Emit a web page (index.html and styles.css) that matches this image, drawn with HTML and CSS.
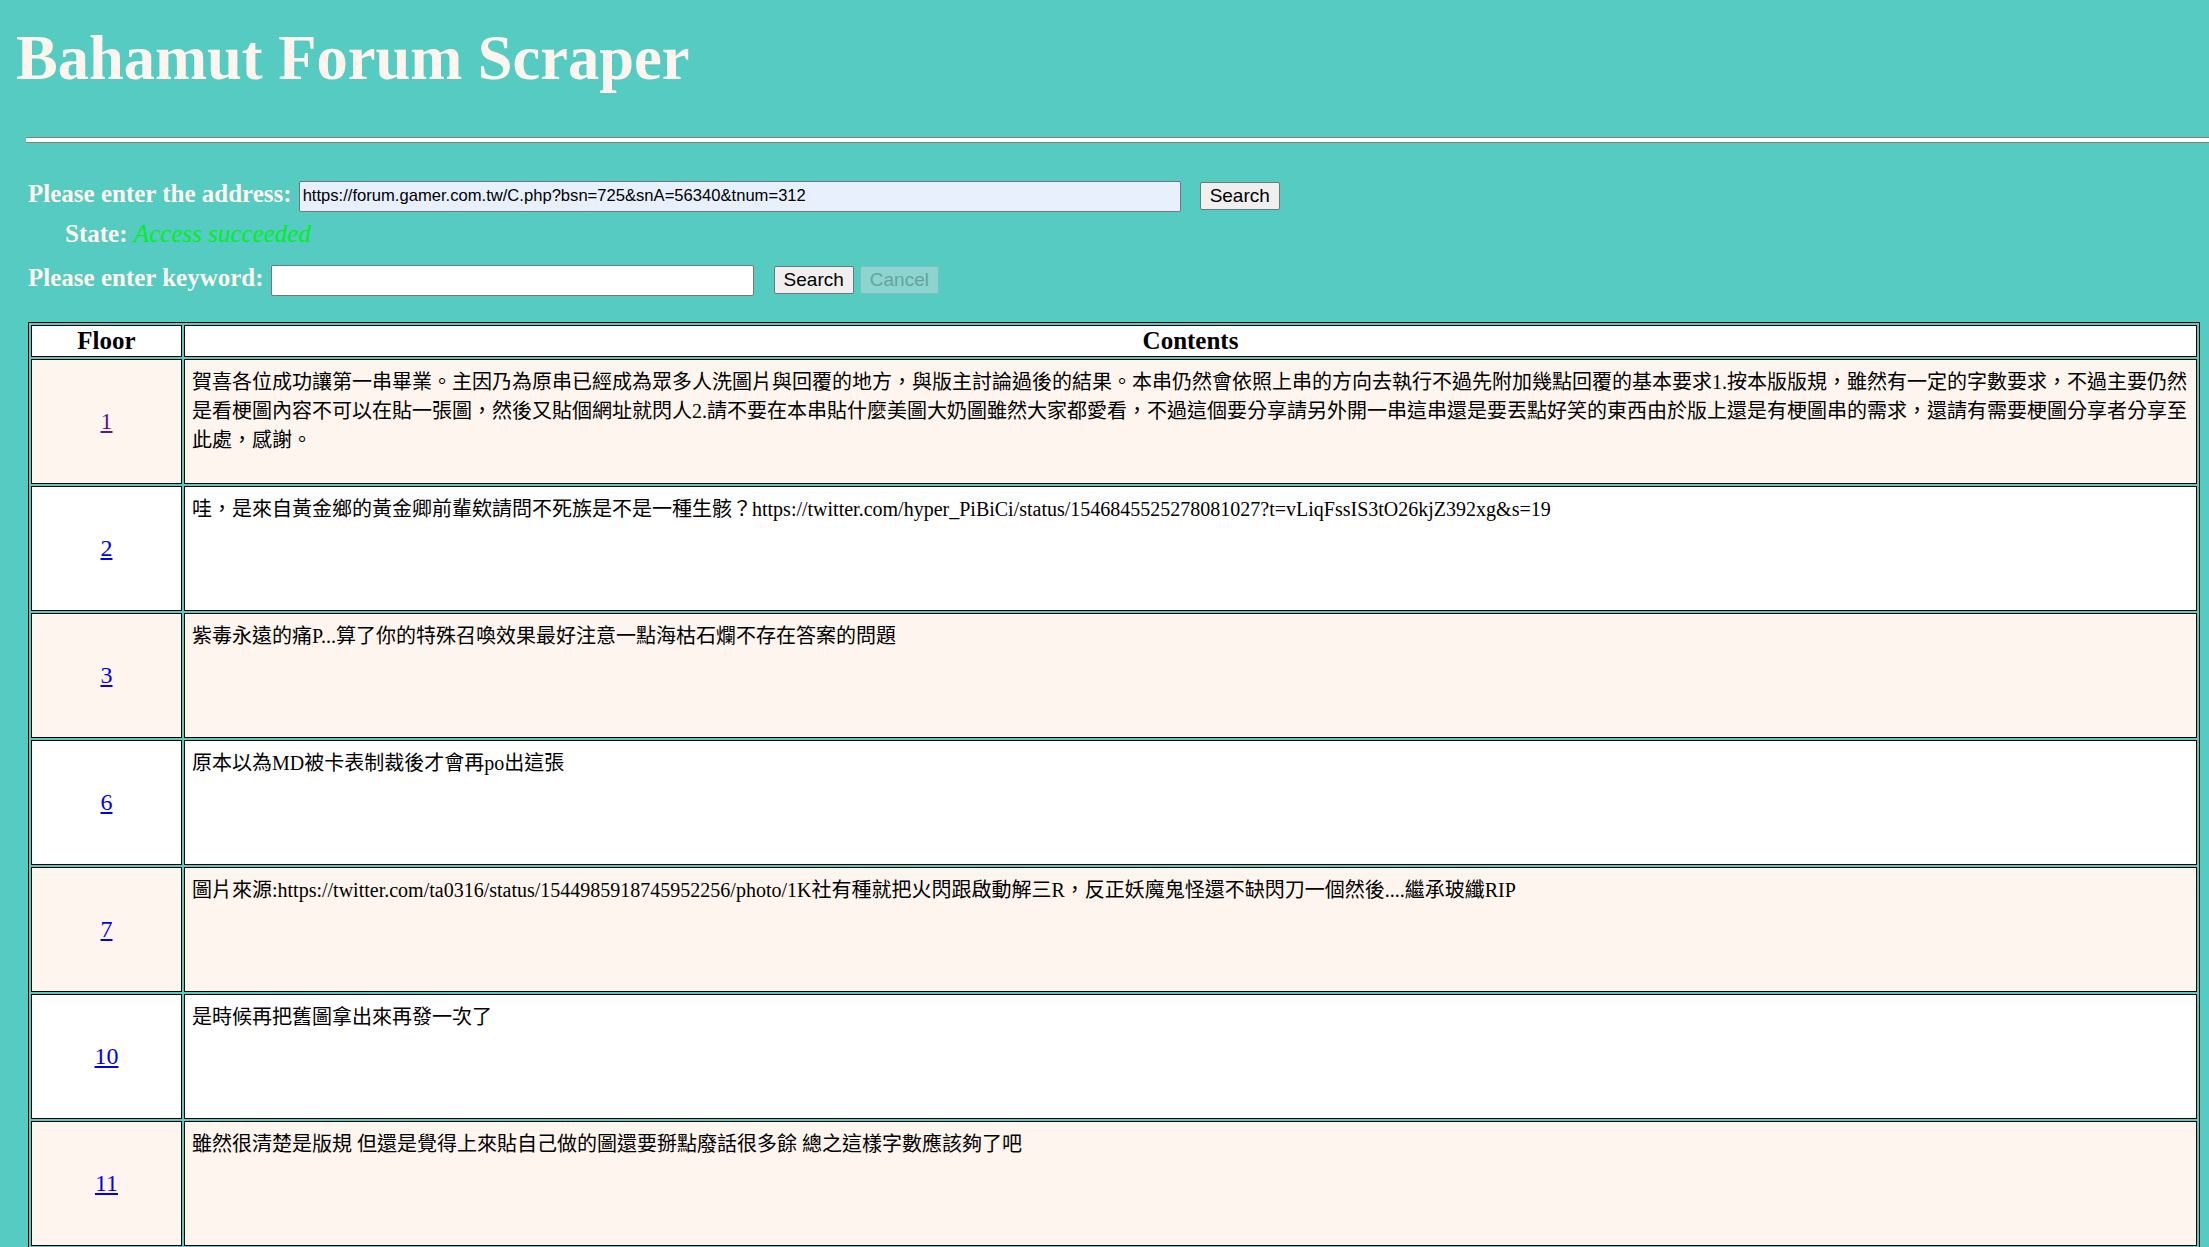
FILE: index.html
```html
<!DOCTYPE html>
<html lang="zh-Hant">
<head>
<meta charset="utf-8">
<title>Bahamut Forum Scraper</title>
<link rel="stylesheet" href="styles.css">
</head>
<body>
<header class="banner">
  <h1 class="title">Bahamut Forum Scraper</h1>
</header>
<div class="rule"></div>
<form class="controls">
  <div class="row row-address">
    <label class="label" for="addr">Please enter the address:</label>
    <input class="field field-address" id="addr" type="text" value="https://forum.gamer.com.tw/C.php?bsn=725&amp;snA=56340&amp;tnum=312">
    <button class="btn btn-search-addr" type="button">Search</button>
  </div>
  <div class="row-state"><span class="label-state">State:</span> <span class="state-ok">Access succeeded</span></div>
  <div class="row row-keyword">
    <label class="label" for="kw">Please enter keyword:</label>
    <input class="field field-keyword" id="kw" type="text">
    <button class="btn btn-search-kw" type="button">Search</button>
    <button class="btn btn-cancel" type="button" disabled>Cancel</button>
  </div>
</form>
<table class="posts">
  <colgroup><col class="col-floor"><col class="col-content"></colgroup>
  <thead>
    <tr class="head"><th>Floor</th><th>Contents</th></tr>
  </thead>
  <tbody>
    <tr class="post odd"><td class="floor"><a class="floor-link visited" href="#f1">1</a></td><td class="content">賀喜各位成功讓第一串畢業。主因乃為原串已經成為眾多人洗圖片與回覆的地方，與版主討論過後的結果。本串仍然會依照上串的方向去執行不過先附加幾點回覆的基本要求1.按本版版規，雖然有一定的字數要求，不過主要仍然是看梗圖內容不可以在貼一張圖，然後又貼個網址就閃人2.請不要在本串貼什麼美圖大奶圖雖然大家都愛看，不過這個要分享請另外開一串這串還是要丟點好笑的東西由於版上還是有梗圖串的需求，還請有需要梗圖分享者分享至此處，感謝。</td></tr>
    <tr class="post even"><td class="floor"><a class="floor-link" href="#f2">2</a></td><td class="content">哇，是來自黃金鄉的黃金卿前輩欸請問不死族是不是一種生骸？https://twitter.com/hyper_PiBiCi/status/1546845525278081027?t=vLiqFssIS3tO26kjZ392xg&amp;s=19</td></tr>
    <tr class="post odd"><td class="floor"><a class="floor-link" href="#f3">3</a></td><td class="content">紫毒永遠的痛P...算了你的特殊召喚效果最好注意一點海枯石爛不存在答案的問題</td></tr>
    <tr class="post even"><td class="floor"><a class="floor-link" href="#f6">6</a></td><td class="content">原本以為MD被卡表制裁後才會再po出這張</td></tr>
    <tr class="post odd"><td class="floor"><a class="floor-link" href="#f7">7</a></td><td class="content">圖片來源:https://twitter.com/ta0316/status/1544985918745952256/photo/1K社有種就把火閃跟啟動解三R，反正妖魔鬼怪還不缺閃刀一個然後....繼承玻纖RIP</td></tr>
    <tr class="post even"><td class="floor"><a class="floor-link" href="#f10">10</a></td><td class="content">是時候再把舊圖拿出來再發一次了</td></tr>
    <tr class="post odd"><td class="floor"><a class="floor-link" href="#f11">11</a></td><td class="content">雖然很清楚是版規 但還是覺得上來貼自己做的圖還要掰點廢話很多餘 總之這樣字數應該夠了吧</td></tr>
  </tbody>
</table>
</body>
</html>
```

FILE: styles.css
```css
* { box-sizing: border-box; }

html, body { margin: 0; padding: 0; }

body {
  background: #56cbc1;
  color: #000;
  font-family: "Liberation Serif", "Noto Sans CJK TC", serif;
}

.banner {
  height: 137px;
  padding: 21px 0 0 16px;
}

.title {
  margin: 0;
  font-size: 62.5px;
  line-height: 74px;
  font-weight: bold;
  color: #fdf5ee;
}

.rule {
  margin-left: 26px;
  height: 6px;
  background: #fff;
  border-top: 1px solid #7f7f7f;
  border-bottom: 1px solid #7f7f7f;
}

.controls {
  padding: 36px 0 0 28px;
}

.row {
  display: flex;
  align-items: center;
  height: 34px;
}

.label {
  font-size: 25px;
  font-weight: bold;
  color: #fdf5ee;
  margin: 0 7px 4px 0;
}

.field {
  height: 31px;
  border: 1px solid #767676;
  border-radius: 2px;
  padding: 0 3px;
  font-family: "Liberation Sans", Arial, sans-serif;
  font-size: 16.6px;
  color: #000;
  outline: none;
}

.field-address {
  width: 882px;
  background: #e8f0fe;
}

.field-keyword {
  width: 483px;
  background: #fff;
}

.btn {
  height: 28px;
  padding: 0 9px;
  border: 1px solid #767676;
  border-radius: 2px;
  background: #efefef;
  color: #000;
  font-family: "Liberation Sans", Arial, sans-serif;
  font-size: 19px;
}

.btn-search-addr { margin-left: 19px; }
.btn-search-kw { margin-left: 20px; }

.btn-cancel {
  margin-left: 6px;
  background: #8bd5ce;
  border-color: #7fbdb7;
  color: #66a39e;
}

.row-state {
  margin: 7px 0 0 37px;
  font-size: 25px;
}

.label-state {
  font-weight: bold;
  color: #fdf5ee;
}

.state-ok {
  font-style: italic;
  color: #00ee22;
}

.row-keyword {
  margin-top: 15px;
}

.posts {
  margin: 25px 0 0 28px;
  width: 2172px;
  table-layout: fixed;
  border: 1px solid #000;
  border-collapse: separate;
  border-spacing: 2px;
}

.col-floor { width: 151px; }

.posts th,
.posts td {
  border: 1px solid #000;
  padding: 1px;
}

.posts th {
  background: #fff;
  font-size: 25px;
  font-weight: bold;
  text-align: center;
}

.post { height: 125px; }
.post.odd td { background: #fdf5ee; }
.post.even td { background: #fff; }

.floor {
  text-align: center;
  vertical-align: middle;
  font-size: 24px;
}

.floor-link { color: #0000ee; }
.floor-link.visited { color: #551a8b; }

.posts td.content {
  vertical-align: top;
  padding: 8px 7px 1px 7px;
  font-size: 20px;
  line-height: 29px;
}
```
